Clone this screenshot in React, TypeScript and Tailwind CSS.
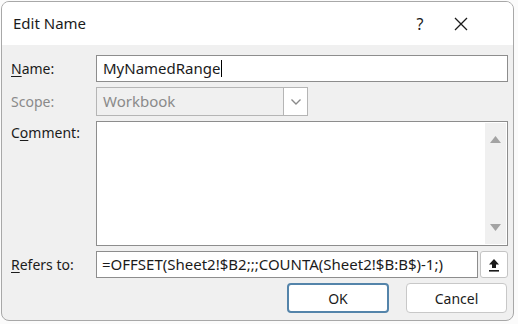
import React from "react";

export default function App() {
  const font = { fontFamily: '"Noto Sans", "Open Sans", sans-serif' };
  return (
    <div className="w-[518px] h-[324px] bg-[#fbfbfb] pl-[1px] pt-[1px]" style={font}>
      <div className="w-[513px] h-[320px] border border-[#a8a8a8] rounded-[8px] overflow-hidden bg-[#f0f0f0] flex flex-col">
        {/* Title bar */}
        <div className="h-[43px] bg-white flex items-center shrink-0">
          <div className="pl-[11px] text-[15px] text-[#1b1b1b] flex-1">Edit Name</div>
          <div className="w-[40px] text-center text-[16px] text-[#1b1b1b] mr-[1px]">?</div>
          <div className="w-[40px] flex justify-center mr-[32px]">
            <svg width="14" height="14" viewBox="0 0 14 14">
              <path d="M1 1 L13 13 M13 1 L1 13" stroke="#1b1b1b" strokeWidth="1.3" />
            </svg>
          </div>
        </div>
        {/* Body */}
        <div className="flex flex-col pt-[10px] pl-[9px] pr-[4px] gap-[5px] text-[14px] text-[#1b1b1b]">
          {/* Name */}
          <div className="flex items-center h-[27px]">
            <div className="w-[85px]"><span className="underline underline-offset-2">N</span>ame:</div>
            <div className="w-[412px] h-[27px] border border-[#8d8d8d] bg-white flex items-center pl-[6px] text-[15px]">
              MyNamedRange<span className="inline-block w-[1px] h-[17px] bg-black ml-[1px]" />
            </div>
          </div>
          {/* Scope */}
          <div className="flex items-center h-[29px]">
            <div className="w-[85px] text-[#8a8a8a]">Scope:</div>
            <div className="w-[212px] h-[29px] border border-[#b5b5b5] bg-[#f0f0f0] flex items-center">
              <div className="flex-1 pl-[6px] text-[15px] text-[#8a8a8a]">Workbook</div>
              <div className="w-[24px] h-[27px] bg-white border-l border-[#b5b5b5] flex items-center justify-center">
                <svg width="12" height="8" viewBox="0 0 12 8">
                  <path d="M1.5 1.5 L6 6 L10.5 1.5" stroke="#8a8a8a" strokeWidth="1.4" fill="none" />
                </svg>
              </div>
            </div>
          </div>
          {/* Comment */}
          <div className="flex items-start h-[125px]">
            <div className="w-[85px] pt-[1px]">C<span className="underline underline-offset-2">o</span>mment:</div>
            <div className="w-[412px] h-[125px] border border-[#8d8d8d] bg-white flex justify-end pr-[1px] py-[1px]">
              <div className="w-[21px] h-full bg-[#f0f0f0] flex flex-col items-center justify-between py-[13px]">
                <svg width="11" height="7" viewBox="0 0 11 7">
                  <path d="M0 7 L5.5 0 L11 7 Z" fill="#a3a3a3" />
                </svg>
                <svg width="11" height="7" viewBox="0 0 11 7">
                  <path d="M0 0 L5.5 7 L11 0 Z" fill="#a3a3a3" />
                </svg>
              </div>
            </div>
          </div>
          {/* Refers to */}
          <div className="flex items-center h-[27px]">
            <div className="w-[85px]"><span className="underline underline-offset-2">R</span>efers to:</div>
            <div className="w-[382px] h-[27px] border border-[#8d8d8d] bg-white flex items-center pl-[5px] text-[15px] whitespace-nowrap overflow-hidden">
              =OFFSET(Sheet2!$B2;;;COUNTA(Sheet2!$B:B$)-1;)
            </div>
            <div className="w-[28px] h-[27px] border border-[#c4c4c4] bg-white rounded-[3px] ml-[2px] flex items-center justify-center">
              <svg width="12" height="14" viewBox="0 0 12 14">
                <path d="M6 1 L11 6.5 L8 6.5 L8 10 L4 10 L4 6.5 L1 6.5 Z" fill="#1b1b1b" />
                <rect x="1" y="12" width="10" height="1.6" fill="#1b1b1b" />
              </svg>
            </div>
          </div>
          {/* Buttons */}
          <div className="flex justify-end gap-[17px] h-[30px] pr-[2px]">
            <div className="w-[102px] h-[30px] border-2 border-[#5484aa] rounded-[4px] bg-white flex items-center justify-center text-[14px]">OK</div>
            <div className="w-[101px] h-[30px] border border-[#c8c8c8] rounded-[4px] bg-white flex items-center justify-center text-[14px]">Cancel</div>
          </div>
        </div>
      </div>
    </div>
  );
}
